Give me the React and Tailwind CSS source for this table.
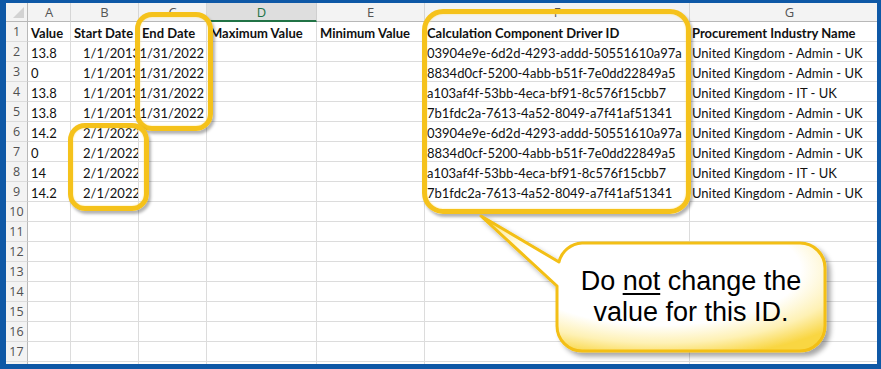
import React from "react";

const LETTERS = ["A", "B", "C", "D", "E", "F", "G"];

const rows = [
  { v: "13.8", s: "1/1/2013", e: "1/31/2022", id: "03904e9e-6d2d-4293-addd-50551610a97a", n: "United Kingdom - Admin - UK" },
  { v: "0", s: "1/1/2013", e: "1/31/2022", id: "8834d0cf-5200-4abb-b51f-7e0dd22849a5", n: "United Kingdom - Admin - UK" },
  { v: "13.8", s: "1/1/2013", e: "1/31/2022", id: "a103af4f-53bb-4eca-bf91-8c576f15cbb7", n: "United Kingdom - IT - UK" },
  { v: "13.8", s: "1/1/2013", e: "1/31/2022", id: "7b1fdc2a-7613-4a52-8049-a7f41af51341", n: "United Kingdom - Admin - UK" },
  { v: "14.2", s: "2/1/2022", e: "", id: "03904e9e-6d2d-4293-addd-50551610a97a", n: "United Kingdom - Admin - UK" },
  { v: "0", s: "2/1/2022", e: "", id: "8834d0cf-5200-4abb-b51f-7e0dd22849a5", n: "United Kingdom - Admin - UK" },
  { v: "14", s: "2/1/2022", e: "", id: "a103af4f-53bb-4eca-bf91-8c576f15cbb7", n: "United Kingdom - IT - UK" },
  { v: "14.2", s: "2/1/2022", e: "", id: "7b1fdc2a-7613-4a52-8049-a7f41af51341", n: "United Kingdom - Admin - UK" },
];

const cell = "h-[20px] border-r border-b border-[#dcdcdc] overflow-hidden whitespace-nowrap leading-[20px] pt-[1px] text-[13px] text-[#111]";
const rowHead = "h-[20px] border-r border-b border-r-[#b8b8b8] border-b-[#dcdcdc] bg-[#f3f3f3] text-center leading-[20px] text-[12.5px] text-[#505050] font-['Open_Sans',sans-serif]";
const hl = "absolute border-[5px] border-[#f5c21b] shadow-[2px_3px_3px_rgba(0,0,0,0.3),inset_0_0_2px_rgba(255,225,110,0.9)]";

export default function App() {
  const dataRows = [];
  for (let i = 0; i < 18; i++) {
    const r = i === 0 ? null : rows[i - 1];
    const isHead = i === 0;
    dataRows.push(
      <React.Fragment key={i}>
        <div className={rowHead}>{i < 17 ? i + 1 : ""}</div>
        <div className={`${cell} pl-[3px] ${isHead ? "font-bold" : ""}`}>{isHead ? "Value" : r ? r.v : ""}</div>
        <div className={`${cell} ${isHead ? "pl-[3px] font-bold" : "pl-[12px]"}`}>{isHead ? "Start Date" : r ? r.s : ""}</div>
        <div className={`${cell} ${isHead ? "pl-[3px] font-bold" : "text-right pr-[2px]"}`}>{isHead ? "End Date" : r ? r.e : ""}</div>
        <div className={`${cell} pl-[3px] ${isHead ? "font-bold" : ""}`}>{isHead ? "Maximum Value" : ""}</div>
        <div className={`${cell} pl-[3px] ${isHead ? "font-bold" : ""}`}>{isHead ? "Minimum Value" : ""}</div>
        <div className={`${cell} pl-[2px] ${isHead ? "font-bold" : ""}`}>{isHead ? "Calculation Component Driver ID" : r ? r.id : ""}</div>
        <div className={`${cell} pl-[2px] ${isHead ? "font-bold" : ""}`}>{isHead ? "Procurement Industry Name" : r ? r.n : ""}</div>
      </React.Fragment>
    );
  }

  return (
    <div className="w-[881px] h-[369px] bg-[#0e58a6] pt-[3px] pl-[6px] pr-[4px] pb-[5px] font-['Lato',sans-serif]">
      <div className="relative w-full h-full bg-white overflow-hidden">
        <div className="grid grid-cols-[22px_43px_68px_68px_110px_108px_265px_200px] w-max">
          <div className="h-[19px] bg-[#f3f3f3] border-r border-b border-[#b8b8b8] relative">
            <div className="absolute right-[3px] bottom-[3px] w-0 h-0 border-l-[11px] border-l-transparent border-b-[11px] border-b-[#d2d2d2]" />
          </div>
          {LETTERS.map((l) =>
            l === "D" ? (
              <div key={l} className="h-[19px] bg-[#dedede] border-r border-r-[#cfcfcf] border-b-2 border-b-[#217346] text-center leading-[18px] text-[13px] text-[#217346] font-['Open_Sans',sans-serif]">
                {l}
              </div>
            ) : (
              <div key={l} className="h-[19px] bg-[#f3f3f3] border-r border-r-[#d6d6d6] border-b border-b-[#b8b8b8] text-center leading-[19px] text-[13px] text-[#555] font-['Open_Sans',sans-serif]">
                {l}
              </div>
            )
          )}
          {dataRows}
        </div>

        {/* yellow highlight callouts */}
        <div className={`${hl} left-[129px] top-[9px] w-[78px] h-[119px] rounded-[17px]`} />
        <div className={`${hl} left-[62px] top-[120px] w-[81px] h-[88px] rounded-[17px]`} />
        <div className={`${hl} left-[416px] top-[6px] w-[269px] h-[205px] rounded-[21px]`} />

        {/* speech bubble */}
        <svg className="absolute left-0 top-0" width="871" height="361" viewBox="6 3 871 361">
          <defs>
            <radialGradient id="bubbleFill" cx="52%" cy="40%" r="66%">
              <stop offset="0%" stopColor="#ffffff" />
              <stop offset="62%" stopColor="#ffffff" />
              <stop offset="82%" stopColor="#fef1b4" />
              <stop offset="100%" stopColor="#f9d643" />
            </radialGradient>
            <filter id="shadow" x="-10%" y="-10%" width="125%" height="130%">
              <feDropShadow dx="4" dy="4" stdDeviation="2.5" floodColor="#000" floodOpacity="0.35" />
            </filter>
          </defs>
          <path
            d="M 582 243 H 800 A 25 25 0 0 1 825 268 V 326 A 25 25 0 0 1 800 351 H 582 A 25 25 0 0 1 557 326 V 286 L 481 216 L 559 262 A 25 25 0 0 1 582 243 Z"
            fill="url(#bubbleFill)"
            stroke="#f3bf12"
            strokeWidth="3"
            strokeLinejoin="round"
            filter="url(#shadow)"
          />
        </svg>
        <div className="absolute left-[551px] top-[263px] w-[268px] text-center text-[27px] leading-[31px] text-black font-['Liberation_Sans',Arial,sans-serif]">
          Do <span className="underline decoration-[2px] underline-offset-[3px]">not</span> change the
          <br />
          value for this ID.
        </div>
      </div>
    </div>
  );
}
